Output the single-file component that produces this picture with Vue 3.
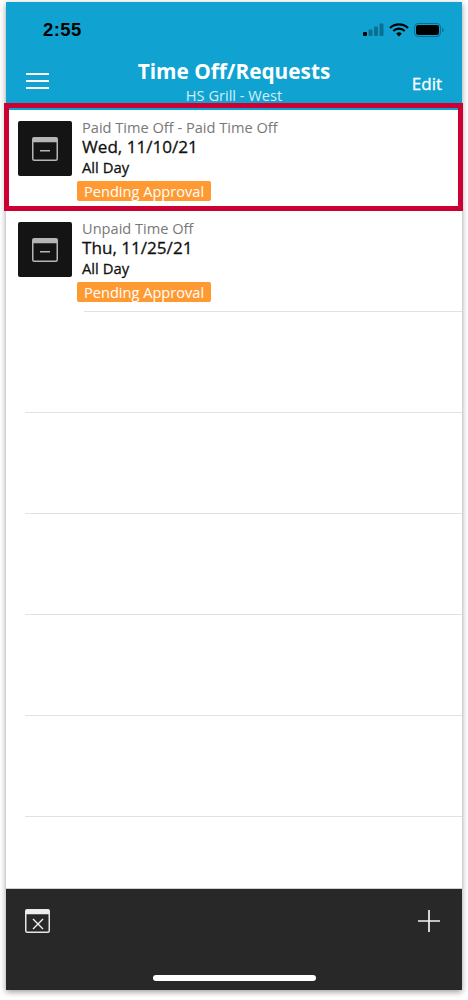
<script setup>
const requests = [
  { id: 1, type: "Paid Time Off - Paid Time Off", date: "Wed, 11/10/21", span: "All Day", status: "Pending Approval" },
  { id: 2, type: "Unpaid Time Off", date: "Thu, 11/25/21", span: "All Day", status: "Pending Approval" }
];
const emptyRows = 5;
</script>

<template>
  <div class="phone">
    <header class="header">
      <div class="status-bar">
        <span class="clock">2:55</span>
        <div class="status-icons">
          <svg width="21" height="14" viewBox="0 0 21 14">
            <rect x="0" y="9" width="4" height="4" rx="1" fill="#000" />
            <rect x="5.500" y="6.500" width="4" height="6.500" rx="1" fill="#0b6f91" />
            <rect x="11" y="3.500" width="4" height="9.500" rx="1" fill="#0b6f91" />
            <rect x="16.500" y="0.500" width="4" height="12.500" rx="1" fill="#0b6f91" />
          </svg>
          <svg width="20" height="14" viewBox="0 0 20 14">
            <path d="M1 5a13 13 0 0 1 18 0" fill="none" stroke="#000" stroke-width="2.200" />
            <path d="M4.300 8a8.200 8.200 0 0 1 11.400 0" fill="none" stroke="#000" stroke-width="2.200" />
            <path d="M7.200 10.700 10 13.500l2.800-2.800a4 4 0 0 0-5.600 0z" fill="#000" />
          </svg>
          <svg width="30" height="14" viewBox="0 0 30 14">
            <rect x="0.500" y="0.500" width="26" height="13" rx="3.500" fill="none" stroke="#0b6f91" />
            <rect x="2" y="2" width="23" height="10" rx="2.200" fill="#000" />
            <rect x="28" y="5" width="1.500" height="4" rx="0.700" fill="#0b6f91" />
          </svg>
        </div>
      </div>
      <div class="nav">
        <div class="menu-btn" aria-label="Menu"><i></i><i></i><i></i></div>
        <div class="nav-title">
          <div class="title">Time Off/Requests</div>
          <div class="subtitle">HS Grill - West</div>
        </div>
        <span class="edit">Edit</span>
      </div>
    </header>

    <main class="list">
      <div v-for="item in requests" :key="item.id" class="row">
        <div class="thumb">
          <svg width="26" height="24" viewBox="0 0 26 24">
            <rect x="0.750" y="0.750" width="24.500" height="22.500" rx="1.500" fill="none" stroke="#b5b5b5" stroke-width="1.500" />
            <rect x="0.750" y="0.750" width="24.500" height="4.500" fill="#b5b5b5" />
            <rect x="8" y="13" width="10" height="1.500" fill="#b5b5b5" />
          </svg>
        </div>
        <div class="row-text">
          <div class="type">{{ item.type }}</div>
          <div class="date">{{ item.date }}</div>
          <div class="span">{{ item.span }}</div>
          <div class="badge">{{ item.status }}</div>
        </div>
      </div>
      <div v-for="n in emptyRows" :key="n" class="row-empty"></div>
    </main>

    <footer class="footer">
      <div class="footer-icons">
        <svg width="25" height="24" viewBox="0 0 25 24">
          <rect x="0.750" y="0.750" width="23.500" height="22.500" rx="1.500" fill="none" stroke="#e6e6e6" stroke-width="1.500" />
          <rect x="0.750" y="0.750" width="23.500" height="4.500" fill="#eee" />
          <path d="M8 10l10 10M18 10 8 20" stroke="#f2f2f2" stroke-width="1.400" fill="none" />
        </svg>
        <svg width="22" height="22" viewBox="0 0 22 22">
          <path d="M11 0v22M0 11h22" stroke="#f2f2f2" stroke-width="1.700" fill="none" />
        </svg>
      </div>
      <div class="home-bar"></div>
    </footer>

    <div class="highlight"></div>
  </div>
</template>

<style scoped>
.phone {
  position: relative;
  display: flex;
  flex-direction: column;
  width: 456px;
  height: 988px;
  margin: 2px 6px 10px;
  background: #fff;
  box-shadow: 0 2px 6px rgba(0, 0, 0, 0.4);
  font-family: "Open Sans", sans-serif;
}

.header {
  height: 108px;
  background: #10a3d1;
  color: #fff;
  box-sizing: border-box;
}

.status-bar {
  display: flex;
  align-items: center;
  justify-content: space-between;
  height: 20px;
  padding: 18px 18px 0 37px;
}

.clock {
  color: #000;
  font-family: "Liberation Sans", sans-serif;
  font-size: 18.500px;
  font-weight: 700;
  letter-spacing: 0.4px;
}

.status-icons {
  display: flex;
  align-items: center;
  gap: 5px;
}

.nav {
  display: flex;
  align-items: flex-start;
  justify-content: space-between;
  margin-top: 18px;
  padding: 0 20px 0 20px;
  position: relative;
}

.menu-btn {
  display: grid;
  gap: 5px;
  margin-top: 15px;
}

.menu-btn i {
  display: block;
  width: 23px;
  height: 2px;
  background: #fff;
}

.nav-title {
  position: absolute;
  left: 0;
  right: 0;
  text-align: center;
}

.title {
  font-size: 20.800px;
  font-weight: 700;
  line-height: 26px;
}

.subtitle {
  margin-top: 1px;
  font-size: 14.600px;
  line-height: 20px;
  color: #d3eef7;
}

.edit {
  margin-top: 14px;
  font-size: 17px;
  line-height: 24px;
  -webkit-text-stroke: 0.3px #fff;
}

.list {
  flex: 1;
  min-height: 0;
  border-bottom: 1px solid #cfcfcf;
}

.row {
  display: flex;
  gap: 10px;
  height: 101px;
  box-sizing: border-box;
  padding: 11px 12px 0;
  position: relative;
}

.row::after {
  content: "";
  position: absolute;
  left: 78px;
  right: 0;
  bottom: 0;
  height: 1px;
  background: #e2e2e2;
}

.thumb {
  display: flex;
  align-items: center;
  justify-content: center;
  flex: none;
  width: 54px;
  height: 55px;
  border-radius: 2px;
  background: #141414;
}

.row-text {
  min-width: 0;
}

.type {
  font-size: 14.600px;
  line-height: 18px;
  color: #787878;
  margin-top: -3px;
}

.date {
  font-size: 17.100px;
  line-height: 22px;
  color: #111;
  -webkit-text-stroke: 0.3px #111;
}

.span {
  font-size: 14.800px;
  line-height: 19px;
  color: #111;
  -webkit-text-stroke: 0.3px #111;
}

.badge {
  display: inline-block;
  margin: 4px 0 0 -5px;
  padding: 0 7px;
  height: 20px;
  border-radius: 2px;
  background: #ff9a33;
  color: #fff;
  font-size: 14.600px;
  line-height: 20px;
  white-space: nowrap;
}

.row-empty {
  height: 101px;
  box-sizing: border-box;
  border-bottom: 1px solid #e2e2e2;
  margin-left: 19px;
}

.footer {
  position: relative;
  flex: none;
  height: 101px;
  background: #282828;
}

.footer-icons {
  display: flex;
  align-items: center;
  justify-content: space-between;
  padding: 20px 22px 0 19px;
}

.home-bar {
  position: absolute;
  left: 147px;
  bottom: 9px;
  width: 163px;
  height: 6px;
  border-radius: 3px;
  background: #fff;
}

.highlight {
  position: absolute;
  left: -2px;
  right: -1px;
  top: 101px;
  height: 108px;
  box-sizing: border-box;
  border: 5px solid #cc0033;
  pointer-events: none;
}
</style>

<style>
body {
  background: #fff;
}
</style>
